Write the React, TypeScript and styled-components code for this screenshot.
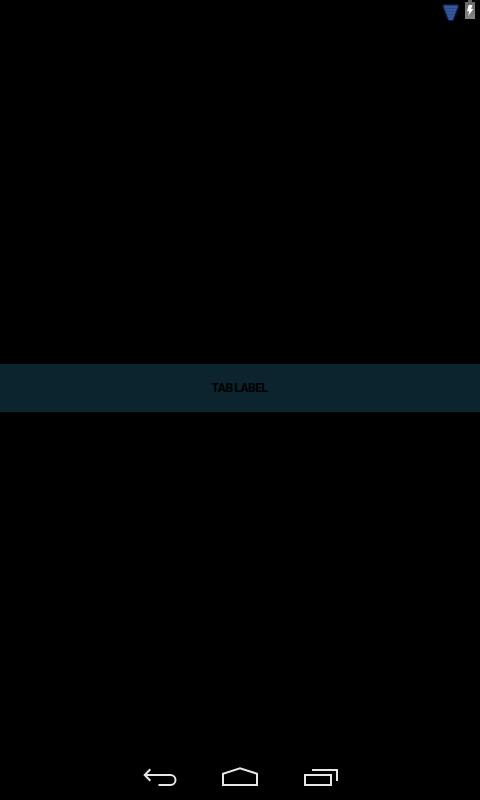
import React from "react";
import styled, { createGlobalStyle } from "styled-components";

const GlobalStyle = createGlobalStyle`
  html, body { margin: 0; background: #000; }
`;

const Screen = styled.main`
  display: flex;
  flex-direction: column;
  width: 480px;
  height: 800px;
  overflow: hidden;
  background: #000;
  font-family: Roboto, "Liberation Sans", sans-serif;
`;

const StatusBar = styled.header`
  display: flex;
  justify-content: flex-end;
  height: 25px;
  padding-right: 4px;
`;

const Content = styled.section`
  display: flex;
  flex: 1;
  flex-direction: column;
  justify-content: center;
  padding-bottom: 1px;
  box-sizing: border-box;
`;

const Tab = styled.div`
  display: flex;
  align-items: center;
  justify-content: center;
  height: 48px;
  padding-right: 1px;
  background: #0b242d;
  color: #000;
  font-size: 12px;
  font-weight: 700;
  line-height: 14px;
  text-transform: uppercase;
  letter-spacing: -0.5px;
  word-spacing: -0.7px;
`;

const NavBar = styled.nav`
  display: flex;
  justify-content: center;
  height: 48px;
`;

const NavButton = styled.div`
  display: flex;
  width: 80px;
  height: 48px;
`;

const Icon = styled.svg`
  display: block;
  flex: none;
`;

const WifiIcon = () => (
  <Icon width="24" height="25" viewBox="440 0 24 25">
    <defs>
      <filter id="glow" x="-40%" y="-40%" width="180%" height="180%">
        <feGaussianBlur stdDeviation="1.3" />
      </filter>
    </defs>
    <path d="M442.5 5H459L453 20.5H448.5Z" fill="#1d3a78" filter="url(#glow)" />
    <path d="M443.5 5.5H458L452.8 20H448.8Z" fill="#36579a" />
    <path d="M444 8.5H457M445.5 11.5H456M447 14.5H455M448 17.5H453.5" stroke="#2c4988" fill="none" />
  </Icon>
);

const BatteryIcon = () => (
  <Icon width="12" height="25" viewBox="464 0 12 25">
    <defs>
      <linearGradient id="body" x1="0" y1="0" x2="0" y2="1">
        <stop offset="0" stopColor="#666" />
        <stop offset="1" stopColor="#858585" />
      </linearGradient>
    </defs>
    <path d="M468 0H472V2H475V19H465V2H468Z" fill="url(#body)" />
    <path d="M468.7 5H472.4L471.2 9H473.3L468.2 16L469.2 11.3H467Z" fill="#fff" />
  </Icon>
);

const NavIcon = ({ x, children }: { x: number; children: React.ReactNode }) => (
  <NavButton>
    <Icon
      width="80"
      height="48"
      viewBox={`${x} 752 80 48`}
      fill="none"
      stroke="#e6e6e6"
      strokeWidth="2"
    >
      {children}
    </Icon>
  </NavButton>
);

export default function App() {
  return (
    <>
      <GlobalStyle />
      <Screen>
        <StatusBar>
          <WifiIcon />
          <BatteryIcon />
        </StatusBar>
        <Content>
          <Tab>Tab label</Tab>
        </Content>
        <NavBar>
          <NavIcon x={120}>
            <path d="M150.3 769.2L144.7 775L150.3 780.8M145 775H170.5A5 5 0 0 1 170.5 785H158.5" />
          </NavIcon>
          <NavIcon x={200}>
            <path d="M223 785V773.7L240 768.2L257 773.7V785Z" />
          </NavIcon>
          <NavIcon x={280}>
            <path d="M305 775H331V785H305ZM312 770H337V781" />
          </NavIcon>
        </NavBar>
      </Screen>
    </>
  );
}
